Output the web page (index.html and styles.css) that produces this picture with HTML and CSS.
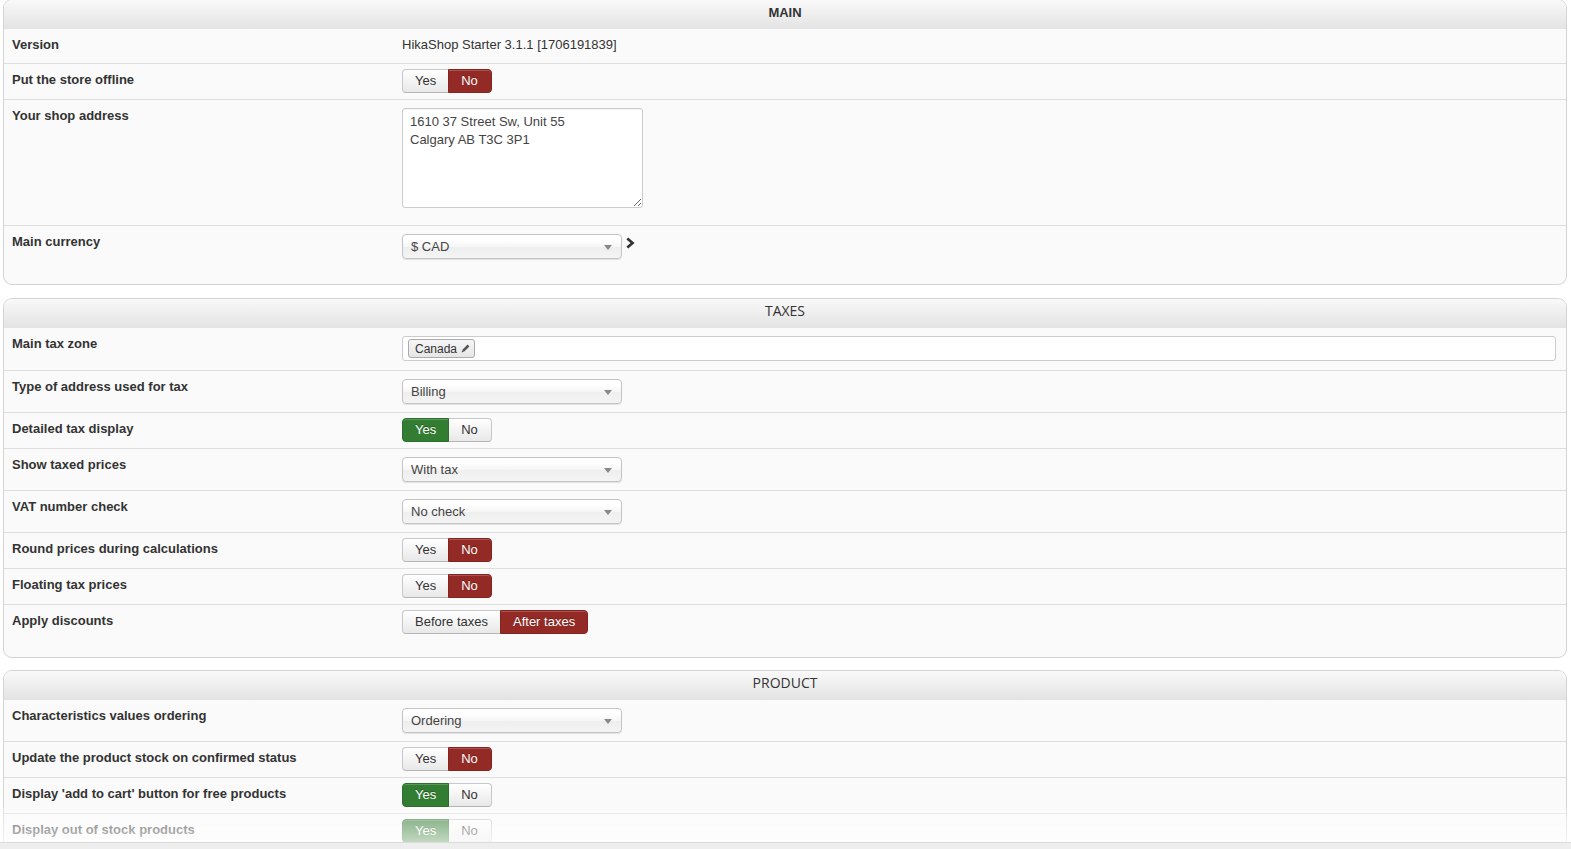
FILE: index.html
```html
<!DOCTYPE html>
<html>
<head>
<meta charset="utf-8">
<title>HikaShop configuration</title>
<link rel="stylesheet" href="styles.css">
</head>
<body>
<div class="wrap">

  <section class="fs fs-first">
    <div class="legend legend-bold">MAIN</div>
    <div class="row">
      <div class="key">Version</div>
      <div class="val val-text">HikaShop Starter 3.1.1 [1706191839]</div>
    </div>
    <div class="row">
      <div class="key">Put the store offline</div>
      <div class="val val-btn">
        <div class="btn-group"><span class="btn">Yes</span><span class="btn btn-red">No</span></div>
      </div>
    </div>
    <div class="row">
      <div class="key">Your shop address</div>
      <div class="val val-area">
        <textarea class="area">1610 37 Street Sw, Unit 55
Calgary AB T3C 3P1</textarea>
      </div>
    </div>
    <div class="row row-last">
      <div class="key">Main currency</div>
      <div class="val val-sel">
        <div class="sel-wrap">
          <div class="select">$ CAD</div>
          <svg class="go" width="10" height="12" viewBox="0 0 10 12"><path d="M2.2 0.5 L8.6 6 L2.2 11.5 L0.4 9.6 L4.6 6 L0.4 2.4 Z" fill="#333"/></svg>
        </div>
      </div>
    </div>
  </section>

  <section class="fs fs-tight">
    <div class="legend legend-mid">TAXES</div>
    <div class="row">
      <div class="key">Main tax zone</div>
      <div class="val val-sel val-zone">
        <div class="zone">
          <span class="tag">Canada
            <svg class="pen" width="9" height="9" viewBox="0 0 9 9"><path d="M6.6 0.6 L8.4 2.4 L3 7.8 L0.6 8.4 L1.2 6 Z" fill="#555"/><path d="M1.6 6.4 L2.6 7.4" stroke="#ddd" stroke-width="0.8"/></svg>
          </span>
        </div>
      </div>
    </div>
    <div class="row">
      <div class="key">Type of address used for tax</div>
      <div class="val val-sel"><div class="select">Billing</div></div>
    </div>
    <div class="row">
      <div class="key">Detailed tax display</div>
      <div class="val val-btn">
        <div class="btn-group"><span class="btn btn-green">Yes</span><span class="btn">No</span></div>
      </div>
    </div>
    <div class="row">
      <div class="key">Show taxed prices</div>
      <div class="val val-sel"><div class="select">With tax</div></div>
    </div>
    <div class="row">
      <div class="key">VAT number check</div>
      <div class="val val-sel"><div class="select">No check</div></div>
    </div>
    <div class="row">
      <div class="key">Round prices during calculations</div>
      <div class="val val-btn">
        <div class="btn-group"><span class="btn">Yes</span><span class="btn btn-red">No</span></div>
      </div>
    </div>
    <div class="row">
      <div class="key">Floating tax prices</div>
      <div class="val val-btn">
        <div class="btn-group"><span class="btn">Yes</span><span class="btn btn-red">No</span></div>
      </div>
    </div>
    <div class="row row-last">
      <div class="key">Apply discounts</div>
      <div class="val val-btn">
        <div class="btn-group"><span class="btn btn-wide">Before taxes</span><span class="btn btn-red btn-wide">After taxes</span></div>
      </div>
    </div>
  </section>

  <section class="fs">
    <div class="legend legend-mid">PRODUCT</div>
    <div class="row">
      <div class="key">Characteristics values ordering</div>
      <div class="val val-sel"><div class="select">Ordering</div></div>
    </div>
    <div class="row">
      <div class="key">Update the product stock on confirmed status</div>
      <div class="val val-btn">
        <div class="btn-group"><span class="btn">Yes</span><span class="btn btn-red">No</span></div>
      </div>
    </div>
    <div class="row">
      <div class="key">Display 'add to cart' button for free products</div>
      <div class="val val-btn">
        <div class="btn-group"><span class="btn btn-green">Yes</span><span class="btn">No</span></div>
      </div>
    </div>
    <div class="row row-last">
      <div class="key">Display out of stock products</div>
      <div class="val val-btn">
        <div class="btn-group"><span class="btn btn-green">Yes</span><span class="btn">No</span></div>
      </div>
    </div>
  </section>

</div>
<div class="fade"></div>
<div class="bottom-bar"></div>
</body>
</html>
```

FILE: styles.css
```css
html, body {
  margin: 0;
  padding: 0;
  background: #ffffff;
}

html {
  overflow: hidden;
}

body {
  font-family: "Liberation Sans", Arial, sans-serif;
  font-size: 13px;
  color: #333333;
}

.wrap {
  padding: 0 4px 0 3px;
}

.fs {
  border: 1px solid #d3d3d3;
  border-radius: 9px;
  background: #fafafa;
  padding-bottom: 17px;
  margin: 0 0 13px 0;
  overflow: hidden;
}

.fs-first {
  margin-top: -1px;
}

.fs-tight {
  margin-bottom: 12px;
}

.legend {
  height: 29px;
  line-height: 29px;
  text-align: center;
  background: linear-gradient(#f9f9f9, #e3e3e3);
  color: #333;
  font-size: 13px;
}

.legend-bold {
  font-weight: bold;
  line-height: 25px;
}

.legend-mid {
  font-weight: normal;
  font-family: "Open Sans", "Liberation Sans", sans-serif;
  font-size: 14px;
  line-height: 23px;
}

.row {
  display: grid;
  grid-template-columns: 390px 1fr;
  border-bottom: 1px solid #dedede;
}

.row-last {
  border-bottom: none;
}

.key {
  padding: 7px 8px 9px 8px;
  line-height: 18px;
  font-weight: bold;
  color: #333;
}

.val {
  padding: 5px 8px 6px 8px;
  min-width: 0;
}

.val-text {
  padding-top: 7px;
  line-height: 18px;
}

.val-btn {
  padding: 5px 8px 6px 8px;
}

.val-sel {
  padding: 8px 8px 8px 8px;
}

.val-zone {
  padding-right: 10px;
  padding-bottom: 9px;
}

.val-area {
  padding: 8px 8px 17px 8px;
}

/* button groups */
.btn-group {
  display: inline-flex;
}

.btn {
  display: inline-block;
  box-sizing: border-box;
  height: 24px;
  line-height: 22px;
  padding: 0 12px;
  border: 1px solid #c8c8c8;
  border-bottom-color: #b5b5b5;
  background: linear-gradient(#ffffff, #e8e8e8);
  color: #333;
  font-size: 13px;
  box-shadow: inset 0 1px 0 rgba(255,255,255,0.2);
}

.btn + .btn {
  margin-left: -1px;
  padding: 0 13px 0 12px;
}

.btn:first-child {
  border-radius: 4px 0 0 4px;
}

.btn:last-child {
  border-radius: 0 4px 4px 0;
}

.btn-red {
  background: #942a25;
  border-color: #86241f;
  color: #ffffff;
  text-shadow: 0 -1px 0 rgba(0,0,0,0.3);
  position: relative;
}

.btn-green {
  background: #337d33;
  border-color: #2c6e2c;
  color: #ffffff;
  text-shadow: 0 -1px 0 rgba(0,0,0,0.3);
  position: relative;
}

.btn.btn-wide {
  padding: 0 12px;
}

/* textarea */
.area {
  display: block;
  box-sizing: border-box;
  width: 241px;
  height: 100px;
  margin: 0;
  padding: 4px 7px;
  border: 1px solid #cccccc;
  border-radius: 3px;
  background: #ffffff;
  font-family: "Liberation Sans", Arial, sans-serif;
  font-size: 13px;
  line-height: 18px;
  color: #444;
  resize: both;
  box-shadow: inset 0 1px 1px rgba(0,0,0,0.05);
}

/* select */
.sel-wrap {
  display: flex;
  align-items: flex-start;
  gap: 4px;
}

.go {
  margin-top: 3px;
}

.select {
  position: relative;
  box-sizing: border-box;
  width: 220px;
  height: 25px;
  line-height: 23px;
  padding-left: 8px;
  border: 1px solid #c4c4c4;
  border-radius: 4px;
  background: linear-gradient(#ffffff 20%, #f6f6f6 50%, #eeeeee 52%, #f4f4f4 100%);
  box-shadow: 0 1px 1px rgba(0,0,0,0.1);
  color: #444;
  font-size: 13px;
}

.select::after {
  content: "";
  position: absolute;
  right: 9px;
  top: 10px;
  border-left: 4px solid transparent;
  border-right: 4px solid transparent;
  border-top: 5px solid #888;
}

/* tax zone */
.zone {
  box-sizing: border-box;
  height: 25px;
  border: 1px solid #cccccc;
  border-radius: 3px;
  background: #ffffff;
  padding: 2px 5px;
}

.tag {
  display: inline-flex;
  align-items: center;
  gap: 4px;
  box-sizing: border-box;
  height: 19px;
  padding: 0 4px 0 6px;
  border: 1px solid #aaaaaa;
  border-radius: 3px;
  background: linear-gradient(#f6f6f6, #e6e6e6);
  font-size: 12px;
  color: #333;
}

.pen {
  display: block;
}

/* bottom fade */
.fade {
  position: fixed;
  left: 0;
  right: 0;
  bottom: 7px;
  height: 34px;
  background: linear-gradient(rgba(255,255,255,0.3), rgba(255,255,255,0.7));
  pointer-events: none;
}

.bottom-bar {
  position: fixed;
  left: 0;
  right: 0;
  bottom: 0;
  height: 6px;
  background: #eeeeee;
  border-top: 1px solid #dcdcdc;
}
```
